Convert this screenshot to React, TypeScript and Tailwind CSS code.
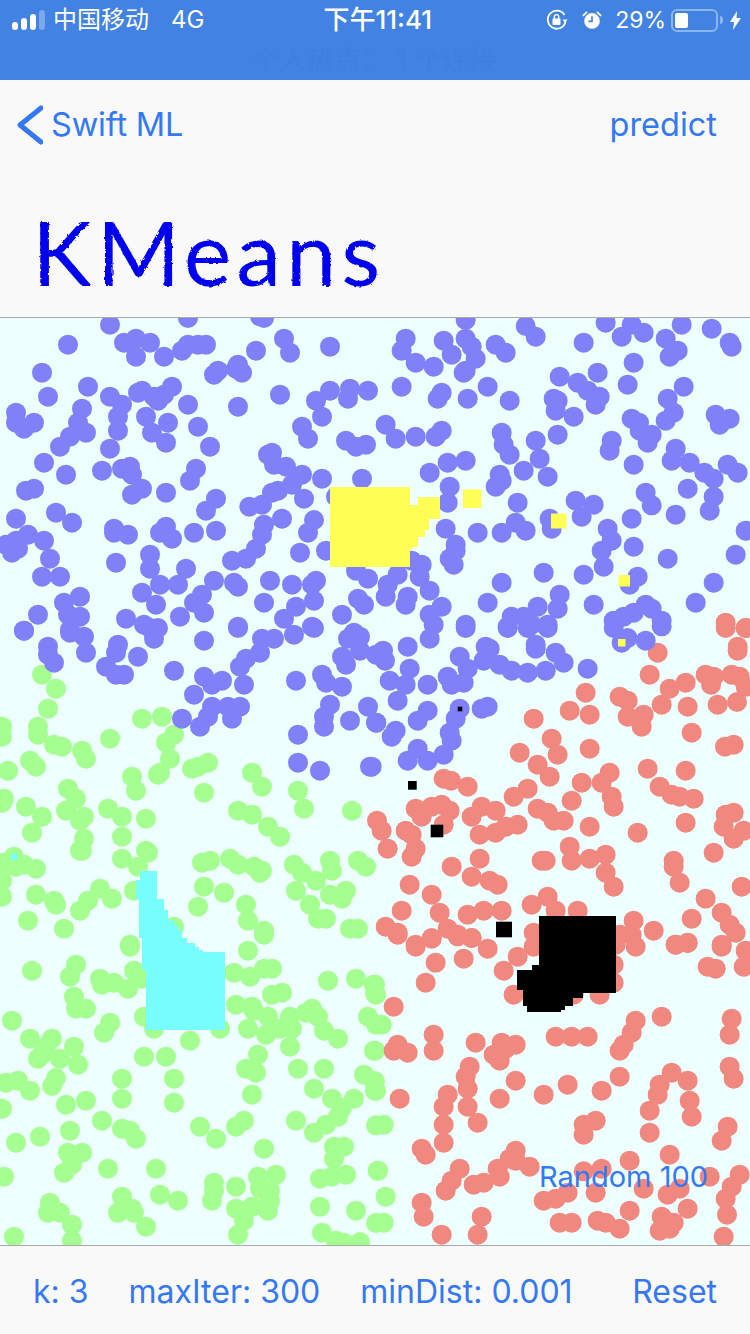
// KMeans demo screen: iOS status bar, nav bar, scatter canvas and bottom toolbar

type Batch = { ox: number; oy: number; pts: number[] };

const R = 10;

// coordinates read off 3x crops: page x = ox + v / 3, page y = oy + v / 3
const blue: Batch[] = [
  {
    ox: 0,
    oy: 318,
    pts: [330,20,564,0,780,-5,792,0,204,80,372,74,408,62,450,74,408,116,492,116,546,98,564,80,594,80,618,80,768,98,852,62,870,104,990,86,126,164,654,158,642,170,714,140,708,152,726,164,264,206,144,236,330,236,366,260,516,206,426,218,414,224,462,236,474,248,492,230,564,260,714,266,840,230,948,248,990,218,1050,212,1044,242,1104,218,246,272,48,284,354,296,438,296,966,296,234,314,102,314,48,314,72,332,504,314,594,326,906,326,258,344,354,338,456,344,210,356,924,362,1038,368,1068,386,1098,380,498,374,180,386,330,392,630,386,816,404,804,410,132,434,822,440,858,446,306,458,366,452,390,446,396,470,198,470,588,452,570,488,906,470,876,500,966,482,1086,482,102,512,78,518,426,512,396,530,498,524,834,518,816,524,648,542,912,542,1008,536,618,578,748,566,786,560,168,584,48,602,216,614,846,602,942,606,792,620,342,632,342,644,384,650,498,626,480,644,516,662,582,644,648,638,924,644,786,650,84,650,48,668,18,680,132,668,54,692,36,704,768,692,900,704,978,698,450,710,150,722,738,722,696,728,348,734,450,752,558,752,126,776,180,776,642,788,702,794,714,806,810,788,876,800,948,788,936,800,480,800,534,800,1068,758,1104,782,426,824,606,830,240,836,468,860,582,854,612,884,192,854,792,854,942,848,888,866,1074,842,1092,860,114,890,204,890,240,896,378,902,540,896,852,902,1026,890,432,920,474,930,72,938,714,926,936,926,1062,944,210,935],
  },
  {
    ox: 375,
    oy: 318,
    pts: [272,6,452,24,482,56,692,14,770,20,806,44,740,56,920,20,1010,32,872,62,1064,74,1070,86,92,62,80,98,206,68,272,62,290,86,230,110,302,122,362,80,392,104,626,74,908,98,884,116,122,134,176,146,776,134,272,158,266,164,668,164,554,176,608,194,80,206,338,206,758,200,926,206,638,218,674,236,662,260,200,224,188,242,278,242,404,248,536,242,548,248,542,278,596,296,878,242,896,284,872,308,1022,290,1064,302,1034,320,32,320,62,362,122,356,182,356,200,338,770,302,792,314,794,338,830,350,818,374,380,344,548,350,482,368,710,368,704,398,386,380,404,410,902,392,890,428,944,434,494,422,988,464,1058,440,1088,464,218,434,272,428,776,440,164,464,446,458,518,476,374,470,380,488,362,506,1016,482,224,506,938,512,812,524,830,562,1016,536,1004,578,428,554,602,548,656,560,218,554,620,596,770,602,902,590,524,602,530,632,422,614,212,632,308,644,380,644,452,638,698,632,710,668,1112,638,680,698,776,686,242,680,242,698,224,722,236,740,878,722,1082,710,110,728,140,740,686,746,506,764,626,770,788,776,764,800,68,770,134,776,38,800,32,836,380,794,1016,794,164,818,98,836,92,860,554,830,338,854,656,860,962,854,200,866,164,890,488,866,548,872,812,860,830,872,860,908,776,884,746,896,716,908,272,920,176,920,410,896,446,896,398,926,518,920,470,920],
  },
  {
    ox: 0,
    oy: 628,
    pts: [72,8,210,14,252,26,144,56,144,80,162,104,258,74,354,50,348,74,414,86,318,116,348,140,372,140,462,32,450,0,612,38,714,0,786,32,822,32,882,20,942,0,780,74,738,92,720,116,522,128,612,146,636,170,666,158,732,170,582,200,636,236,624,266,684,236,720,236,696,272,600,296,546,272,888,158,966,140,978,164,1026,176,990,230,972,266,972,296,1050,278,1104,236,1128,284,894,320,894,404,960,428,1110,416,1044,32,1080,26,1080,68,1026,86,1038,110,1128,80],
  },
  {
    ox: 375,
    oy: 628,
    pts: [98,56,24,68,30,98,164,32,272,0,398,0,458,0,518,0,332,56,344,62,482,50,482,62,542,74,566,104,254,86,326,98,278,122,374,110,410,128,458,134,512,128,104,122,92,170,44,158,158,170,218,146,230,170,266,164,638,122,68,218,158,248,128,278,254,242,242,272,320,242,338,236,4,284,62,308,50,326,224,314,230,338,128,362,98,398,158,398,206,380,-10,416,740,44,758,30,812,38,716,0,860,-5],
  },
];

const red: Batch[] = [
  { ox: 375, oy: 318, pts: [1052,914,1112,930] },
  {
    ox: 375,
    oy: 628,
    pts: [1052,0,1112,0,848,74,1088,56,1088,68,824,140,992,140,1016,146,1008,170,932,164,884,182,1070,140,1094,146,1112,176,632,194,734,206,758,218,860,230,938,236,1028,230,1086,222,584,248,644,260,758,266,806,260,800,296,476,272,950,314,530,332,644,362,1050,356,1076,350,434,374,548,380,488,410,524,446,818,422,932,428,704,434,620,464,680,464,206,452,228,458,278,476,854,476,458,482,416,506,710,506,590,518,716,536,890,500,914,506,956,512,122,542,200,530,170,536,224,548,140,566,320,536,362,548,290,566,488,542,518,554,536,578,566,578,1052,560,1076,554,644,596,932,584,1046,596,6,578,20,608,92,608,110,620,206,590,428,590,392,596,362,614,314,620,788,614,1106,608,1076,632,584,656,122,662,38,662,110,686,1016,674,692,680,644,692,590,698,500,698,512,698,314,692,896,698,896,716,230,716,692,734,290,746,344,758,368,770,914,764,716,776,1100,776,104,770,170,800,518,806,470,830,992,812,542,848,608,848,80,848,194,854,278,860,326,848,380,848,1040,854,950,872,776,878,1064,890,1082,914,32,896,68,914,218,902,248,920,290,930,170,932,122,950,476,914,770,920,836,908,902,950,938,945,1040,950,735,920],
  },
  {
    ox: 375,
    oy: 938,
    pts: [68,-10,122,26,170,0,248,-5,290,0,338,32,266,62,182,74,428,56,386,98,152,134,416,170,56,206,476,26,716,80,716,134,596,170,674,170,722,20,782,26,902,20,938,14,1040,26,1112,38,998,86,1022,92,1106,86,782,248,860,236,770,284,746,320,734,338,1070,242,1064,290,176,290,176,338,68,320,56,338,98,344,302,314,380,314,422,320,356,350,374,368,392,332,542,296,590,296,638,296,284,386,272,416,278,452,278,506,1064,386,1076,422,890,404,938,428,854,440,848,470,422,428,734,416,578,440,680,458,506,470,218,470,206,506,374,482,74,482,944,488,824,518,950,536,308,554,206,560,626,560,662,548,626,590,824,584,1058,566,1040,608,206,614,140,632,152,650,422,638,404,662,422,668,464,686,884,650,764,668,254,692,230,728,212,758,368,692,374,716,326,734,296,740,626,700,680,692,1094,710,1004,716,1070,746,1052,782,914,752,878,770,806,752,662,764,578,764,542,782,506,788,938,812,140,794,146,836,320,836,764,818,1056,830,860,836,896,854,884,872,854,878,554,854,590,854,668,848,692,854,734,872,200,890,308,890,1046,896],
  },
];

const green: Batch[] = [
  {
    ox: 0,
    oy: 628,
    pts: [126,140,168,182,144,242,6,296,6,326,114,296,114,320,162,350,186,356,246,368,258,392,330,332,426,272,486,266,522,320,498,344,510,392,480,434,474,440,576,422,594,416,624,404,90,398,108,416,24,428,396,446,408,488,204,482,228,512,198,548,240,578,252,566,12,512,6,524,78,536,126,566,96,614,324,542,366,566,438,572,366,626,252,632,240,668,246,668,612,494,756,434,786,476,894,488,912,542,714,548,756,560,804,596,840,626,1056,548,438,668,444,674,366,692,414,716,42,686,12,704,48,716,72,710,108,722,606,704,630,698,690,692,714,710,762,716,780,734,786,728,882,710,906,734,948,758,990,698,996,728,1074,698,1098,716,888,788,1038,788,990,800,1026,812,612,776,672,794,738,830,6,758,6,806,108,800,162,818,168,830,300,782,336,812,264,818,240,848,402,788,594,836,744,878,792,908,930,830,954,872,978,872,84,878,192,902,522,896,1050,902,1074,902,390,950],
  },
  {
    ox: 0,
    oy: 938,
    pts: [390,26,744,38,792,-10,96,98,228,80,210,116,300,122,306,140,342,134,384,152,402,98,426,122,702,104,750,116,792,92,816,92,984,128,1068,122,1122,140,1128,170,816,170,846,164,222,176,228,212,258,212,708,200,756,206,804,236,762,218,870,236,918,224,936,212,954,236,36,248,330,254,312,284,432,236,462,272,660,272,744,272,798,290,840,272,876,272,972,278,1014,302,1104,236,1128,260,90,302,156,302,138,326,222,326,114,362,126,350,180,362,234,380,570,308,870,326,774,350,432,356,498,356,1122,338,738,392,768,404,894,392,972,392,1092,410,1122,430,1128,458,366,422,522,422,168,420,156,444,18,434,54,428,90,458,942,452,756,470,366,482,522,494,996,482,1062,482,198,500,258,488,6,512,1026,510,1014,536,306,548,732,548,708,566,888,548,978,560,942,584,600,566,366,572,390,578,408,602,648,602,210,578,120,596,48,614,1002,626,1032,626,1002,662,792,632,204,644,246,644,216,680,192,704,324,692,468,692,828,710,774,716,960,722,996,716,1038,710,1134,698,12,716,642,734,708,746,642,758,780,752,810,758,636,788,810,788,366,776,480,770,534,788,150,794,396,812,402,824,354,824,144,824,180,824,708,812,756,806,804,818,960,806,1068,818,216,860,732,848,438,866,42,896,714,890,966,884,1008,908,1032,914,1080,912,216,908,1128,855,1128,562],
  },
  { ox: 375, oy: 938, pts: [0,140,0,165,20,260,0,338,0,430,0,458,26,560,8,698,32,776,26,854] },
];

const Dots = ({ batches, fill }: { batches: Batch[]; fill: string }) => (
  <g fill={fill}>
    {batches.flatMap((b, i) =>
      b.pts
        .filter((_, n) => n % 2 === 0)
        .map((v, n) => (
          <circle key={`${i}-${n}`} cx={b.ox + v / 3} cy={b.oy + b.pts[n * 2 + 1] / 3} r={R} />
        ))
    )}
  </g>
);

const Scatter = () => (
  <svg viewBox="0 318 750 927" className="block w-full h-full">
    <Dots batches={green} fill="#a4fe90" />
    <Dots batches={red} fill="#f08880" />
    <Dots batches={blue} fill="#8080f8" />

    {/* yellow centroid trail */}
    <g fill="#ffff55">
      <polygon points="330,487 410,487 410,505 418,505 418,497 440,497 440,519 429,519 429,530 425,530 425,537 418,537 418,547 414,547 410,550 410,567 330,567" />
      <rect x="463" y="489.5" width="18.5" height="18.5" />
      <rect x="551" y="513.5" width="15.5" height="15" />
      <rect x="618.5" y="575" width="11.5" height="11.5" />
      <rect x="618" y="639" width="7.5" height="7.5" />
    </g>

    {/* cyan centroid trail */}
    <g fill="#77ffff">
      <polygon points="140,871 157,871 157,899 164,899 164,910 168,910 168,920 174,920 174,925 178,925 178,930 182,930 182,938 187,938 187,943 195,943 195,947 199,947 199,950 203,950 203,952 225,952 225,1030 146,1030 146,970 142,970 142,938 139,938 139,899 136,899 136,880 140,880" />
      <rect x="11" y="853.5" width="6.5" height="6.5" />
    </g>

    {/* black centroid trail */}
    <g fill="#000000">
      <polygon points="539,916 616,916 616,993 583,993 583,998 573,998 573,1006 565,1006 565,1010 561,1010 561,1012 527,1012 527,1006 523,1006 523,990 517,990 517,970 532,970 532,965 539,965" />
      <rect x="408" y="781" width="8.7" height="8.7" />
      <rect x="430.7" y="824.7" width="12.6" height="12.6" />
      <rect x="496" y="921.7" width="16" height="15.6" />
      <rect x="457.7" y="706.7" width="4.6" height="4.6" />
    </g>
  </svg>
);

const StatusBar = () => (
  <div className="relative h-20 bg-[#4282e2] text-white [font-family:Inter,'Noto_Sans_CJK_SC',sans-serif]">
    <div className="flex items-center h-10 pl-3 pr-[9px] text-2xl">
      <div className="flex items-end gap-[3px] h-5 w-[33px]">
        <span className="w-1.5 h-2 rounded-sm bg-white" />
        <span className="w-1.5 h-3 rounded-sm bg-white" />
        <span className="w-1.5 h-4 rounded-sm bg-white" />
        <span className="w-1.5 h-5 rounded-sm bg-white/30" />
      </div>
      <span className="ml-2">中国移动</span>
      <span className="ml-[22px]">4G</span>
      <span className="ml-[119px] text-[26px] font-medium">下午11:41</span>
      <svg viewBox="0 0 22 22" className="ml-auto w-[22px] h-[22px]" fill="none" stroke="white" strokeWidth="1.8">
        <path d="M19.5 13a9 9 0 1 1-1-7" />
        <path d="M21.5 10.5h-5l2.5 3.5z" fill="white" stroke="none" />
        <rect x="6.5" y="9.5" width="8" height="6.5" rx="1" fill="white" stroke="none" />
        <path d="M8.3 10V7.8a2.2 2.2 0 0 1 4.4 0V10" strokeWidth="1.4" />
      </svg>
      <svg viewBox="0 0 22 22" className="ml-3.5 w-5 h-5" fill="white">
        <circle cx="11" cy="12" r="8.6" />
        <path d="M11 7v5.5H7" fill="none" stroke="#4282e2" strokeWidth="1.8" />
        <path d="M1 6.5 5.5 2M21 6.5 16.5 2" fill="none" stroke="white" strokeWidth="2" />
      </svg>
      <span className="ml-[13px] text-[23px]">29%</span>
      <div className="ml-[5px] flex items-center">
        <div className="w-[47px] h-[23px] rounded-[6px] border-2 border-white/40 p-[2px]">
          <div className="w-[13px] h-full rounded-[2px] bg-white" />
        </div>
        <span className="w-[3px] h-2 rounded-r-sm bg-white/40 ml-[2px]" />
      </div>
      <svg viewBox="0 0 11 19" className="ml-[7px] w-[11px] h-[19px]" fill="white">
        <path d="M7 0 0 11h4l-1 8 8-12H6.5z" />
      </svg>
    </div>
    <div className="absolute left-0 right-0 top-[42px] text-center text-[26px] leading-9 tracking-[1px] whitespace-pre text-[#3f7fdf]">
      个人热点： 1 个连接
    </div>
  </div>
);

export default function App() {
  return (
    <div className="flex flex-col w-[750px] h-[1334px] overflow-hidden bg-[#f9f9f9] [font-family:Inter,sans-serif] text-[#3478f6]">
      <StatusBar />

      {/* rough-edged title, the reference uses a hand-cut looking face */}
      <svg width="0" height="0" className="absolute">
        <filter id="rough">
          <feTurbulence type="fractalNoise" baseFrequency="0.3" numOctaves="2" seed="4" />
          <feDisplacementMap in="SourceGraphic" scale="3" />
        </filter>
      </svg>

      {/* nav + large title */}
      <div className="h-[238px] border-b border-[#a9a9a9]">
        <div className="flex items-center h-[88px] pt-[2px] pl-[17px] pr-[33px] text-[32.5px]">
          <svg viewBox="0 0 26 40" className="w-[26px] h-10" fill="none" stroke="#3478f6" strokeWidth="5" strokeLinecap="round" strokeLinejoin="round">
            <path d="M24 3 3 20l21 17" />
          </svg>
          <span className="ml-2 tracking-[-0.2px]">Swift ML</span>
          <span className="ml-auto">predict</span>
        </div>
        <h1 className="mt-[28px] pl-[32px] text-[90px] leading-[110px] tracking-[5px] font-normal text-[#0000ee] [font-family:Lato,sans-serif] [filter:url(#rough)]">
          KMeans
        </h1>
      </div>

      {/* canvas */}
      <div className="relative h-[927px] bg-[#eeffff]">
        <Scatter />
        <span className="absolute left-[539px] top-[841px] text-[29px] leading-9">Random 100</span>
      </div>

      {/* toolbar */}
      <div className="flex-1 flex items-center gap-10 pl-[33px] pr-[33px] pt-1 border-t border-[#a9a9a9] text-[32px]">
        <span>k: 3</span>
        <span>maxIter: 300</span>
        <span>minDist: 0.001</span>
        <span className="ml-auto">Reset</span>
      </div>
    </div>
  );
}
